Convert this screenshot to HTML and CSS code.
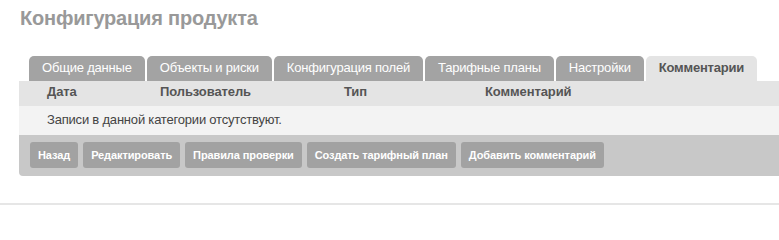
FILE: index.html
```html
<!DOCTYPE html>
<html lang="ru">
<head>
<meta charset="utf-8">
<title>Конфигурация продукта</title>
<link rel="stylesheet" href="styles.css">
</head>
<body>
<div class="page">
  <h1 class="title">Конфигурация продукта</h1>
  <div class="panel">
    <ul class="tabs">
      <li class="tab">Общие данные</li>
      <li class="tab">Объекты и риски</li>
      <li class="tab">Конфигурация полей</li>
      <li class="tab">Тарифные планы</li>
      <li class="tab">Настройки</li>
      <li class="tab tab-active">Комментарии</li>
    </ul>
    <div class="grid">
      <div class="grid-head">
        <span>Дата</span>
        <span>Пользователь</span>
        <span>Тип</span>
        <span>Комментарий</span>
      </div>
      <div class="grid-empty">Записи в данной категории отсутствуют.</div>
    </div>
    <div class="actions">
      <button class="btn">Назад</button>
      <button class="btn">Редактировать</button>
      <button class="btn">Правила проверки</button>
      <button class="btn">Создать тарифный план</button>
      <button class="btn">Добавить комментарий</button>
    </div>
  </div>
  <div class="footer-line"></div>
</div>
</body>
</html>
```

FILE: styles.css
```css
html, body {
  margin: 0;
  padding: 0;
  background: #ffffff;
}

body {
  font-family: "Liberation Sans", Arial, sans-serif;
  font-size: 13px;
  color: #444;
  overflow: hidden;
}

.page {
  width: 779px;
}

.title {
  margin: 0;
  padding: 6px 0 0 20px;
  font-size: 20px;
  line-height: 24px;
  font-weight: bold;
  letter-spacing: -0.2px;
  color: #999999;
}

.panel {
  margin: 26px 0 0 19px;
}

.tabs {
  list-style: none;
  margin: 0;
  padding: 0 0 0 10px;
  display: flex;
  align-items: flex-end;
}

.tab {
  margin-right: 2px;
  padding: 3px 13px 4px;
  line-height: 18px;
  letter-spacing: -0.2px;
  background: #a3a3a3;
  color: #ffffff;
  border-radius: 5px 5px 0 0;
  white-space: nowrap;
}

.tab-active {
  margin-right: 0;
  background: #e4e4e4;
  color: #555555;
  font-weight: bold;
}

.grid-head {
  display: grid;
  grid-template-columns: 113px 184px 141px 1fr;
  padding: 2px 0 5px 28px;
  line-height: 18px;
  letter-spacing: -0.1px;
  background: #e4e4e4;
  color: #555555;
  font-weight: bold;
}

.grid-empty {
  padding: 5px 0 6px 28px;
  line-height: 18px;
  letter-spacing: -0.2px;
  background: #f3f3f3;
  color: #444444;
}

.actions {
  display: flex;
  gap: 5px;
  padding: 7px 0 8px 11px;
  background: #c8c8c8;
  border-radius: 0 0 0 4px;
}

.btn {
  height: 26px;
  padding: 0 8px;
  border: 0;
  border-radius: 3px;
  background: #a2a2a2;
  color: #ffffff;
  font-family: "Liberation Sans", Arial, sans-serif;
  font-size: 11px;
  font-weight: bold;
  letter-spacing: -0.1px;
  line-height: 26px;
  white-space: nowrap;
}

.footer-line {
  margin-top: 27px;
  height: 2px;
  background: #e6e6e6;
}
```
